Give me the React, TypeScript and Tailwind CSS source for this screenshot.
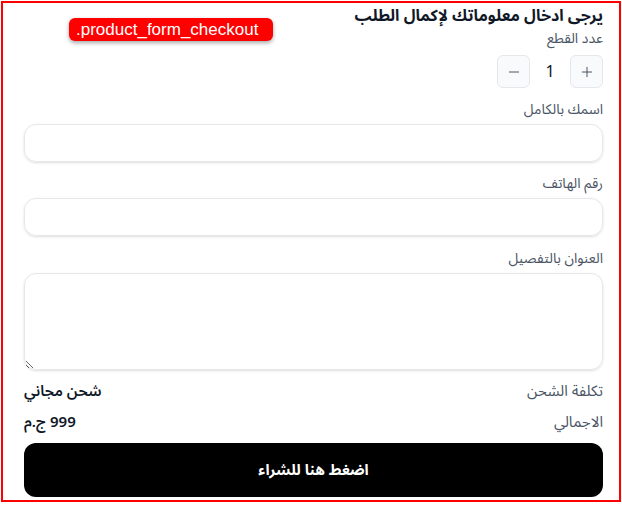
import React, { useState } from 'react';
import { Minus, Plus } from 'lucide-react';

const Field: React.FC<{ label: string; children: React.ReactNode; className?: string }> = ({ label, children, className }) => (
  <div className={className}>
    <label className="block text-sm leading-5 text-gray-600">{label}</label>
    {children}
  </div>
);

export default function App() {
  const [qty, setQty] = useState(1);

  return (
    <div
      className="w-[622px] h-[505px] bg-white p-px"
      style={{ fontFamily: '"Noto Sans Arabic", "Noto Naskh Arabic", "Noto Sans", "DejaVu Sans", sans-serif' }}
    >
      <div dir="rtl" className="relative h-[501px] border-2 border-[#ff0000] pr-[16px] pl-[21px]">
        {/* debug tag from the page */}
        <span
          dir="ltr"
          className="absolute left-[66px] top-[15px] flex h-[23px] items-center rounded-md bg-[#ff0000] pl-[7px] pr-[15px] text-[17px] text-white shadow-[0_2px_4px_rgba(0,0,0,0.35)]"
          style={{ fontFamily: '"Liberation Sans", Arial, sans-serif' }}
        >
          .product_form_checkout
        </span>

        <h2 className="text-[16px] font-bold leading-[26px] text-gray-900">يرجى ادخال معلوماتك لإكمال الطلب</h2>

        <Field label="عدد القطع">
          <div className="mt-[6px] flex items-center">
            <button
              onClick={() => setQty(qty + 1)}
              className="flex h-[33px] w-[33px] items-center justify-center rounded-md border border-gray-200 bg-gray-50 text-gray-600"
            >
              <Plus size={16} strokeWidth={1.5} />
            </button>
            <span className="w-[40px] text-center text-base text-gray-900">{qty}</span>
            <button
              onClick={() => setQty(Math.max(1, qty - 1))}
              className="flex h-[33px] w-[33px] items-center justify-center rounded-md border border-gray-200 bg-gray-50 text-gray-600"
            >
              <Minus size={16} strokeWidth={1.5} />
            </button>
          </div>
        </Field>

        <Field label="اسمك بالكامل" className="mt-[12px]">
          <input className="mt-[4px] block h-[38px] w-full rounded-xl border border-gray-200 shadow-sm" />
        </Field>

        <Field label="رقم الهاتف" className="mt-[12px]">
          <input className="mt-[4px] block h-[38px] w-full rounded-xl border border-gray-200 shadow-sm" />
        </Field>

        <Field label="العنوان بالتفصيل" className="mt-[13px]">
          <textarea className="mt-[4px] block h-[97px] w-full rounded-xl border border-gray-200 shadow-sm" />
        </Field>

        <div className="mt-[9px] flex items-center justify-between text-[15px] leading-6">
          <span className="text-gray-600">تكلفة الشحن</span>
          <span className="font-semibold text-gray-900">شحن مجاني</span>
        </div>
        <div className="mt-[7px] flex items-center justify-between text-[15px] leading-6">
          <span className="text-gray-600">الاجمالي</span>
          <span className="font-semibold text-gray-900">999 ج.م</span>
        </div>

        <button className="mt-[9px] h-[54px] w-full rounded-xl bg-black text-[15px] font-bold text-white">
          اضغط هنا للشراء
        </button>
      </div>
    </div>
  );
}
